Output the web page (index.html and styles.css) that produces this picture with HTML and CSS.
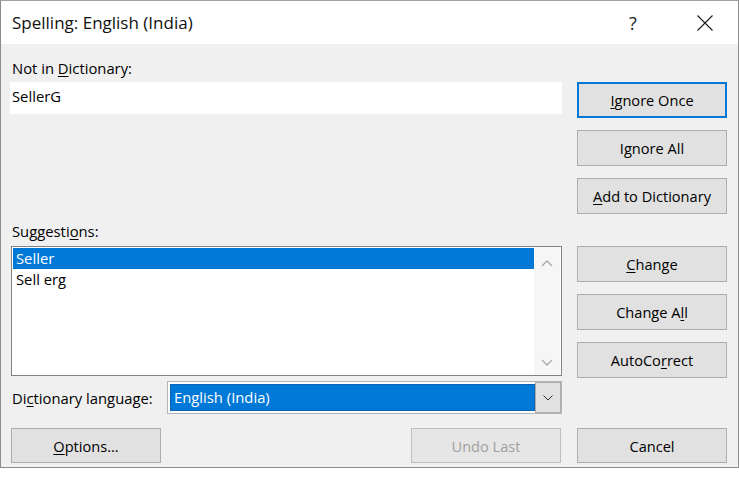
FILE: index.html
```html
<!DOCTYPE html>
<html>
<head>
<meta charset="utf-8">
<link rel="stylesheet" href="styles.css">
</head>
<body>
<div class="window">
  <div class="titlebar">
    <div class="title">Spelling: English (India)</div>
    <div class="help">?</div>
    <div class="close">
      <svg width="16" height="16" viewBox="0 0 16 16"><path d="M0.5 0.5 L15.5 15.5 M15.5 0.5 L0.5 15.5" stroke="#1a1a1a" stroke-width="1.1" fill="none"/></svg>
    </div>
  </div>
  <div class="main">
    <div class="top">
      <div class="left">
        <div class="label lbl-notin">Not in <u>D</u>ictionary:</div>
        <div class="textbox">SellerG</div>
        <div class="label lbl-sugg">Suggesti<u>o</u>ns:</div>
        <div class="listbox">
          <div class="items">
            <div class="item selected">Seller</div>
            <div class="item">Sell erg</div>
          </div>
          <div class="scrollbar">
            <svg width="12" height="8" viewBox="0 0 12 8"><path d="M1 7 L6 2 L11 7" stroke="#a8a8a8" stroke-width="1.3" fill="none"/></svg>
            <svg width="12" height="8" viewBox="0 0 12 8"><path d="M1 1 L6 6 L11 1" stroke="#a8a8a8" stroke-width="1.3" fill="none"/></svg>
          </div>
        </div>
        <div class="langrow">
          <div class="label lbl-lang">Di<u>c</u>tionary language:</div>
          <div class="combo">
            <div class="combo-value"><span>English (India)</span></div>
            <div class="combo-btn">
              <svg width="10" height="6" viewBox="0 0 10 6"><path d="M0.5 0.5 L5 5 L9.5 0.5" stroke="#333" stroke-width="1" fill="none"/></svg>
            </div>
          </div>
        </div>
      </div>
      <div class="right">
        <button class="btn focused"><u>I</u>gnore Once</button>
        <button class="btn">I<u>g</u>nore All</button>
        <button class="btn"><u>A</u>dd to Dictionary</button>
        <button class="btn gap-big"><u>C</u>hange</button>
        <button class="btn">Change A<u>l</u>l</button>
        <button class="btn">AutoCo<u>r</u>rect</button>
      </div>
    </div>
    <div class="bottom">
      <button class="btn"><u>O</u>ptions...</button>
      <div class="spacer"></div>
      <button class="btn disabled">Undo Last</button>
      <button class="btn">Cancel</button>
    </div>
  </div>
</div>
</body>
</html>
```

FILE: styles.css
```css
* { box-sizing: border-box; }
html, body { margin: 0; padding: 0; background: #ffffff; }
body {
  width: 739px;
  height: 477px;
  overflow: hidden;
  font-family: "Open Sans", "Noto Sans", sans-serif;
  color: #000;
}
.window {
  width: 739px;
  height: 468px;
  border: 1px solid #8c8c8c;
  border-top-color: #a0a0a0;
  background: #f0f0f0;
  display: flex;
  flex-direction: column;
}
.titlebar {
  height: 43px;
  background: #ffffff;
  display: flex;
  align-items: center;
  flex-shrink: 0;
}
.title {
  font-size: 17px;
  padding-left: 11px;
  flex: 1;
  color: #111;
}
.help {
  font-size: 18px;
  width: 20px;
  text-align: center;
  margin-right: 54px;
  color: #222;
}
.close {
  width: 16px;
  height: 16px;
  margin-right: 25px;
  display: flex;
}
.main {
  flex: 1;
  padding: 0 10px 0 9px;
  display: flex;
  flex-direction: column;
}
.top {
  display: flex;
  gap: 15px;
}
.left {
  width: 552px;
  display: flex;
  flex-direction: column;
}
.label {
  font-size: 14.8px;
  line-height: 20px;
  padding-left: 2px;
  white-space: nowrap;
}
.lbl-notin { margin-top: 14px; }
.textbox {
  margin-top: 4px;
  height: 32px;
  background: #fff;
  font-size: 14.8px;
  line-height: 28px;
  padding-left: 2px;
}
.lbl-sugg { margin-top: 107px; }
.listbox {
  margin-top: 5px;
  margin-left: 1px;
  height: 130px;
  border: 1px solid #828282;
  background: #fff;
  display: flex;
  padding: 1px;
}
.items { flex: 1; }
.item {
  height: 21px;
  line-height: 21px;
  font-size: 14.8px;
  padding-left: 3px;
}
.item.selected { background: #0078d7; color: #fff; }
.scrollbar {
  width: 26px;
  background: #f6f6f6;
  display: flex;
  flex-direction: column;
  justify-content: space-between;
  align-items: center;
  padding: 12px 0 8px;
  margin: -1px 0 -1px 0;
}
.langrow {
  margin-top: 5px;
  height: 33px;
  display: flex;
  align-items: center;
}
.lbl-lang { width: 157px; }
.combo {
  flex: 1;
  height: 33px;
  border: 1px solid #b4b4b4;
  background: #fff;
  display: flex;
  padding: 2px;
}
.combo-value {
  flex: 1;
  background: #0078d7;
  border: 1px dotted #1c4f8a;
  color: #fff;
  font-size: 14.8px;
  line-height: 25px;
  padding-left: 3px;
}
.combo-btn {
  width: 26px;
  margin: -2px -2px -2px 0;
  background: #e1e1e1;
  border: 1px solid #adadad;
  display: flex;
  align-items: center;
  justify-content: center;
}
.right {
  width: 150px;
  display: flex;
  flex-direction: column;
  padding-top: 38px;
  gap: 12px;
}
.btn {
  width: 150px;
  height: 36px;
  background: #e1e1e1;
  border: 1px solid #adadad;
  font-family: "Open Sans", "Noto Sans", sans-serif;
  font-size: 14.6px;
  color: #000;
  padding: 0;
  margin: 0;
}
.btn.focused { border: 2px solid #0078d7; }
.btn.gap-big { margin-top: 20px; }
.btn.disabled { color: #a0a0a0; background: #e6e6e6; border-color: #bfbfbf; }
.bottom {
  margin-top: 14px;
  display: flex;
  gap: 16px;
  padding-left: 1px;
  padding-right: 1px;
}
.bottom .btn { height: 35px; }
.spacer { flex: 1; }
u { text-decoration-thickness: 1px; text-underline-offset: 2px; }
```
